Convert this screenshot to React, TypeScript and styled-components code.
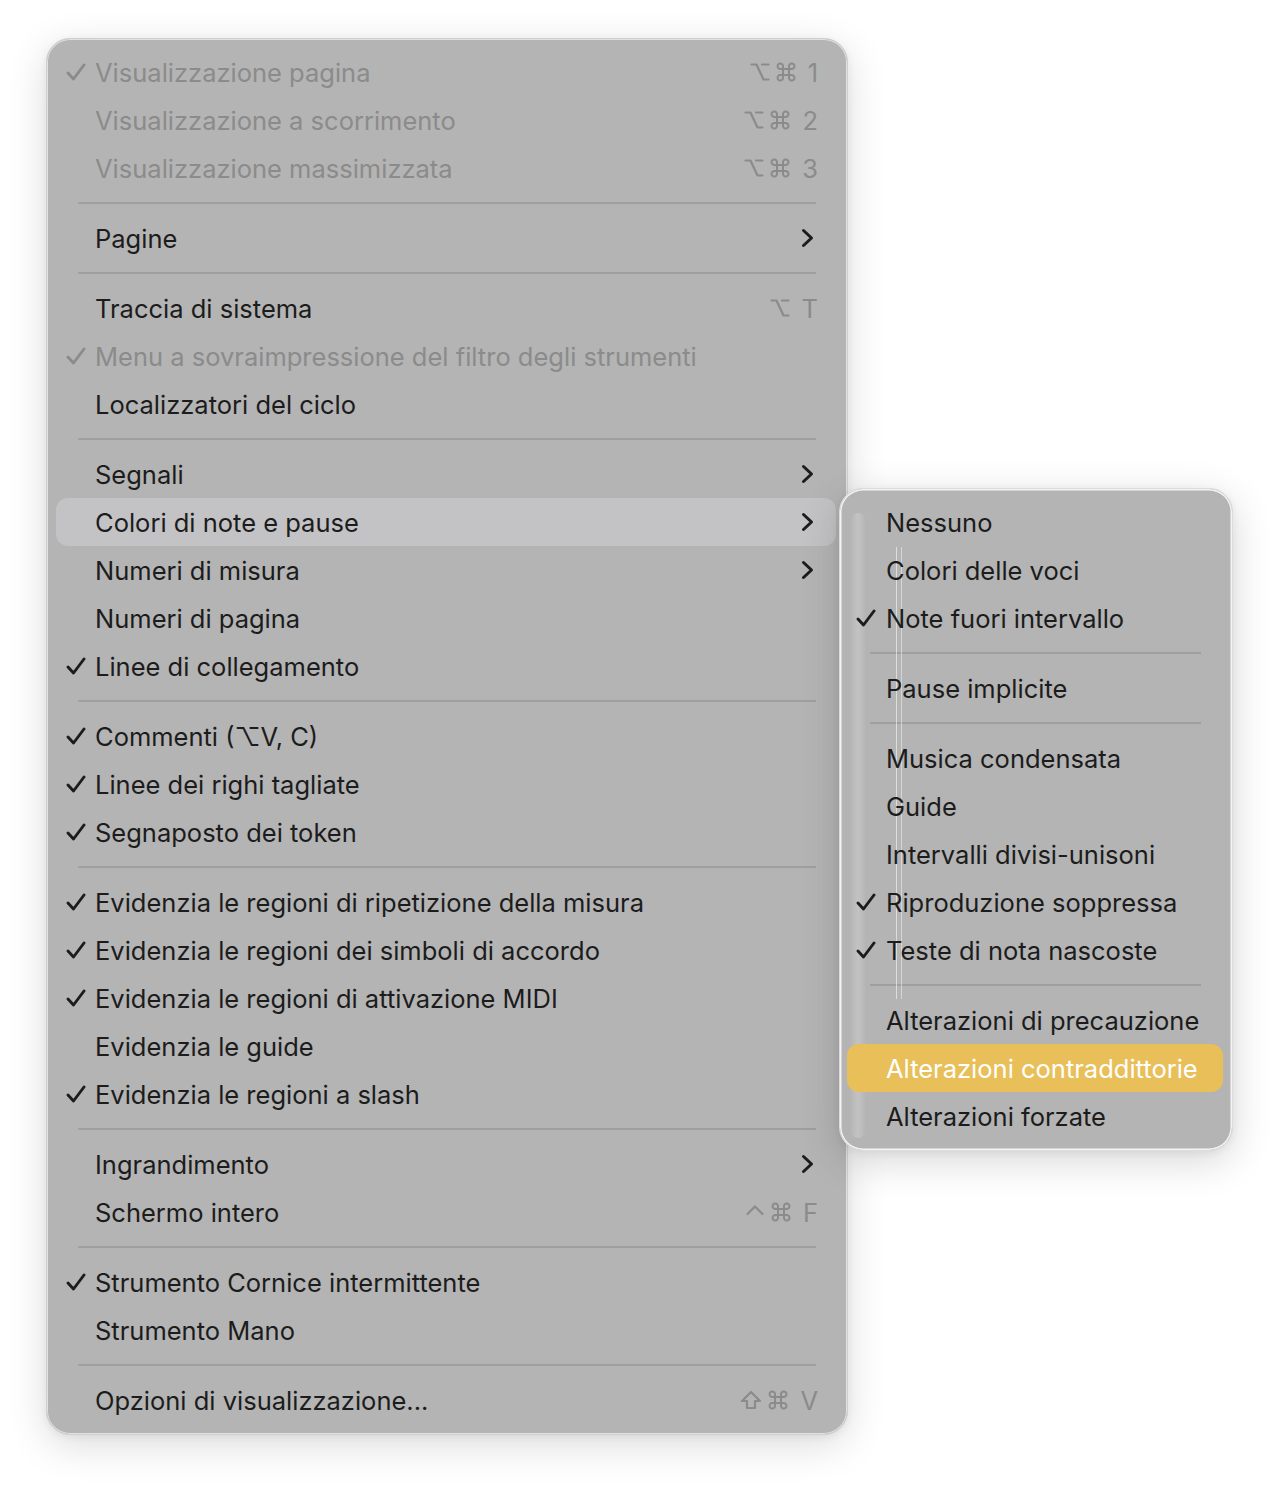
import React from "react";
import styled, { createGlobalStyle, css } from "styled-components";

const Global = createGlobalStyle`
  html, body { margin: 0; padding: 0; background: #ffffff; }
  body { font-family: Inter, "Noto Sans", "DejaVu Sans", sans-serif; -webkit-font-smoothing: antialiased; }
`;

const Stage = styled.div`
  display: flex;
  align-items: flex-start;
  padding: 38px 0 0 46px;
  min-height: 1488px;
  box-sizing: border-box;
`;

const Panel = styled.div<{ $w: number; $pad: string }>`
  position: relative;
  box-sizing: border-box;
  width: ${(p) => p.$w}px;
  padding: ${(p) => p.$pad};
  background: #b4b4b4;
  border: 1px solid #cfcfcf;
  border-radius: 24px;
  box-shadow: 0 0 0 1px rgba(255, 255, 255, 0.6) inset, 0 10px 40px rgba(0, 0, 0, 0.14), 0 2px 8px rgba(0, 0, 0, 0.06);
  display: flex;
  flex-direction: column;
`;

const SubPanel = styled(Panel)`
  margin-top: 450px;
  margin-left: -9px;
  border-color: #dcdcdc;
  box-shadow: 0 0 0 1.5px rgba(255, 255, 255, 0.85) inset, 0 10px 40px rgba(0, 0, 0, 0.16), 0 2px 8px rgba(0, 0, 0, 0.06);
`;

const GlassBand = styled.div`
  position: absolute;
  left: 11px;
  top: 24px;
  bottom: 12px;
  width: 14px;
  border-radius: 8px;
  background: linear-gradient(90deg, rgba(255,255,255,0.04), rgba(255,255,255,0.2), rgba(255,255,255,0.04));
  pointer-events: none;
`;

const GlassLine = styled.div`
  position: absolute;
  left: 56px;
  top: 58px;
  height: 452px;
  width: 4px;
  border-left: 1px solid rgba(255, 255, 255, 0.55);
  border-right: 1px solid rgba(255, 255, 255, 0.45);
  pointer-events: none;
`;

const Row = styled.div<{ $hl?: "gray" | "yellow"; $lp: number; $rp: number }>`
  position: relative;
  height: 48px;
  display: flex;
  align-items: center;
  padding: 0 ${(p) => p.$rp}px 0 ${(p) => p.$lp}px;
  border-radius: 12px;
  font-size: 25.5px;
  color: #1c1c1c;
  ${(p) =>
    p.$hl === "gray" &&
    css`
      background: #c3c3c5;
    `}
  ${(p) =>
    p.$hl === "yellow" &&
    css`
      background: #e8bf58;
      color: #ffffff;
    `}
`;

const CheckSlot = styled.span<{ $left: number; $dim?: boolean }>`
  position: absolute;
  left: ${(p) => p.$left}px;
  top: 50%;
  transform: translateY(-50%);
  display: flex;
  color: ${(p) => (p.$dim ? "#8b8b8b" : "#1c1c1c")};
`;

const Label = styled.span<{ $dim?: boolean }>`
  flex: 1;
  white-space: nowrap;
  color: ${(p) => (p.$dim ? "#8b8b8b" : "inherit")};
`;

const Keys = styled.span`
  display: flex;
  align-items: center;
  gap: 6px;
  color: #8b8b8b;
  font-size: 25.5px;
`;

const KeyChar = styled.span`
  margin-left: 6px;
`;

const ChevronWrap = styled.span`
  display: flex;
  margin-right: 4px;
`;

const Sep = styled.div<{ $l: number; $r: number }>`
  height: 22px;
  display: flex;
  align-items: center;
  padding: 0 ${(p) => p.$r}px 0 ${(p) => p.$l}px;
  &::after {
    content: "";
    flex: 1;
    height: 2px;
    background: #9f9f9f;
  }
`;

const Check = () => (
  <svg width="20" height="18" viewBox="0 0 20 18" fill="none">
    <path d="M2 10 L7.5 16 L18 2" stroke="currentColor" strokeWidth="2.9" strokeLinecap="round" strokeLinejoin="round" />
  </svg>
);

const Chevron = () => (
  <svg width="13" height="20" viewBox="0 0 13 20" fill="none">
    <path d="M2.5 2.5 L10.5 10 L2.5 17.5" stroke="#1c1c1c" strokeWidth="3" strokeLinecap="round" strokeLinejoin="round" />
  </svg>
);

const KeySym: React.FC<{ k: string }> = ({ k }) => {
  const common = { stroke: "currentColor", strokeWidth: 2.2, fill: "none", strokeLinecap: "round" as const, strokeLinejoin: "round" as const };
  if (k === "⌥")
    return (
      <svg width="20" height="20" viewBox="0 0 20 20">
        <path d="M1.5 2.5 H6.5 L13.5 17.5 H18.5" {...common} />
        <path d="M12 2.5 H18.5" {...common} />
      </svg>
    );
  if (k === "⌘")
    return (
      <svg width="20" height="20" viewBox="0 0 20 20">
        <path
          d="M7 7 H13 V13 H7 Z M7 7 V4.5 A2.75 2.75 0 1 0 4.5 7 H7 M13 7 V4.5 A2.75 2.75 0 1 1 15.5 7 H13 M13 13 V15.5 A2.75 2.75 0 1 0 15.5 13 H13 M7 13 V15.5 A2.75 2.75 0 1 1 4.5 13 H7"
          {...common}
          strokeWidth={2}
        />
      </svg>
    );
  if (k === "⌃")
    return (
      <svg width="20" height="20" viewBox="0 0 20 20">
        <path d="M2.5 12 L10 4.5 L17.5 12" {...common} />
      </svg>
    );
  if (k === "⇧")
    return (
      <svg width="22" height="20" viewBox="0 0 22 20">
        <path d="M11 2 L20 11 H15 V18 H7 V11 H2 Z" {...common} />
      </svg>
    );
  return <KeyChar>{k}</KeyChar>;
};

type Item =
  | { sep: true }
  | {
      sep?: false;
      label: string;
      check?: boolean;
      dim?: boolean;
      keys?: string[];
      sub?: boolean;
      hl?: "gray" | "yellow";
    };

const mainItems: Item[] = [
  { label: "Visualizzazione pagina", check: true, dim: true, keys: ["⌥", "⌘", "1"] },
  { label: "Visualizzazione a scorrimento", dim: true, keys: ["⌥", "⌘", "2"] },
  { label: "Visualizzazione massimizzata", dim: true, keys: ["⌥", "⌘", "3"] },
  { sep: true },
  { label: "Pagine", sub: true },
  { sep: true },
  { label: "Traccia di sistema", keys: ["⌥", "T"] },
  { label: "Menu a sovraimpressione del filtro degli strumenti", check: true, dim: true },
  { label: "Localizzatori del ciclo" },
  { sep: true },
  { label: "Segnali", sub: true },
  { label: "Colori di note e pause", sub: true, hl: "gray" },
  { label: "Numeri di misura", sub: true },
  { label: "Numeri di pagina" },
  { label: "Linee di collegamento", check: true },
  { sep: true },
  { label: "Commenti (⌥V, C)", check: true },
  { label: "Linee dei righi tagliate", check: true },
  { label: "Segnaposto dei token", check: true },
  { sep: true },
  { label: "Evidenzia le regioni di ripetizione della misura", check: true },
  { label: "Evidenzia le regioni dei simboli di accordo", check: true },
  { label: "Evidenzia le regioni di attivazione MIDI", check: true },
  { label: "Evidenzia le guide" },
  { label: "Evidenzia le regioni a slash", check: true },
  { sep: true },
  { label: "Ingrandimento", sub: true },
  { label: "Schermo intero", keys: ["⌃", "⌘", "F"] },
  { sep: true },
  { label: "Strumento Cornice intermittente", check: true },
  { label: "Strumento Mano" },
  { sep: true },
  { label: "Opzioni di visualizzazione...", keys: ["⇧", "⌘", "V"] },
];

const subItems: Item[] = [
  { label: "Nessuno" },
  { label: "Colori delle voci" },
  { label: "Note fuori intervallo", check: true },
  { sep: true },
  { label: "Pause implicite" },
  { sep: true },
  { label: "Musica condensata" },
  { label: "Guide" },
  { label: "Intervalli divisi-unisoni" },
  { label: "Riproduzione soppressa", check: true },
  { label: "Teste di nota nascoste", check: true },
  { sep: true },
  { label: "Alterazioni di precauzione" },
  { label: "Alterazioni contraddittorie", hl: "yellow" },
  { label: "Alterazioni forzate" },
];

const MenuList: React.FC<{
  items: Item[];
  lp: number;
  rp: number;
  checkLeft: number;
  sepL: number;
  sepR: number;
}> = ({ items, lp, rp, checkLeft, sepL, sepR }) => (
  <>
    {items.map((it, i) =>
      it.sep ? (
        <Sep key={i} $l={sepL} $r={sepR} />
      ) : (
        <Row key={i} $hl={it.hl} $lp={lp} $rp={rp}>
          {it.check && (
            <CheckSlot $left={checkLeft} $dim={it.dim}>
              <Check />
            </CheckSlot>
          )}
          <Label $dim={it.dim}>{it.label}</Label>
          {it.keys && (
            <Keys>
              {it.keys.map((k, j) => (
                <KeySym key={j} k={k} />
              ))}
            </Keys>
          )}
          {it.sub && (
            <ChevronWrap>
              <Chevron />
            </ChevronWrap>
          )}
        </Row>
      )
    )}
  </>
);

export default function App() {
  return (
    <>
      <Global />
      <Stage>
        <Panel $w={802} $pad="9px 11px 10px 9px">
          <MenuList items={mainItems} lp={39} rp={18} checkLeft={10} sepL={22} sepR={20} />
        </Panel>
        <SubPanel $w={394} $pad="9px 9px 10px 7px">
          <GlassBand />
          <GlassLine />
          <MenuList items={subItems} lp={39} rp={18} checkLeft={9} sepL={23} sepR={22} />
        </SubPanel>
      </Stage>
    </>
  );
}
